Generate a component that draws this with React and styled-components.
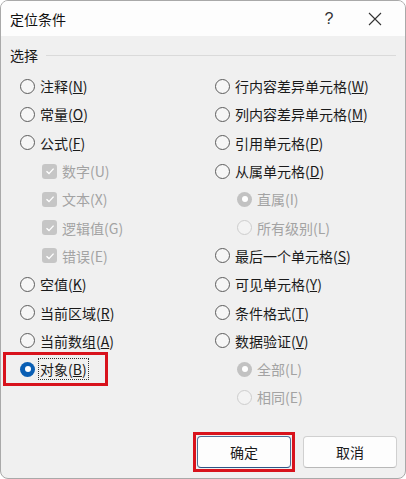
import styled, { createGlobalStyle } from 'styled-components';

const GlobalStyle = createGlobalStyle`
  html, body {
    margin: 0;
    padding: 0;
    background: #ffffff;
  }
  body {
    font-family: 'Noto Sans CJK SC', 'Noto Sans', sans-serif;
    font-size: 14px;
    color: #1a1a1a;
  }
  * {
    box-sizing: border-box;
  }
`;

const Window = styled.div`
  width: 406px;
  height: 479px;
  display: flex;
  flex-direction: column;
  border: 1px solid #a9a9a9;
  border-radius: 8px;
  overflow: hidden;
  background: #f0f0f0;
`;

const TitleBar = styled.div`
  height: 35px;
  flex: none;
  display: flex;
  align-items: center;
  padding: 0 7px 0 9px;
  background: #fdfdfd;
`;

const Title = styled.div`
  flex: 1;
  font-size: 14px;
  line-height: 20px;
  color: #111;
`;

const TitleButton = styled.div`
  width: 46px;
  height: 35px;
  display: flex;
  align-items: center;
  justify-content: center;
  font-family: 'Liberation Sans', sans-serif;
  font-size: 16px;
  color: #333;
`;

const Body = styled.div`
  flex: 1;
  display: flex;
  flex-direction: column;
  padding: 9px 9px 6px 9px;
`;

const GroupHeader = styled.div`
  display: flex;
  align-items: center;
  gap: 8px;
  height: 20px;
`;

const Legend = styled.span`
  line-height: 20px;
`;

const GroupLine = styled.div`
  flex: 1;
  height: 1px;
  margin-top: 1px;
  background: #dadada;
`;

const Options = styled.div`
  display: grid;
  grid-template-columns: 195px 1fr;
  padding-left: 10px;
  margin-top: 7px;
`;

const Column = styled.div`
  display: flex;
  flex-direction: column;
`;

const Row = styled.label`
  height: 28.3px;
  display: flex;
  align-items: center;
  gap: 5px;
  padding-left: ${(p) => (p.$sub ? '22px' : '0')};
  color: ${(p) => (p.$disabled ? '#a3a3a3' : '#1a1a1a')};
  white-space: nowrap;
`;

const Radio = styled.span`
  width: 15px;
  height: 15px;
  flex: none;
  border-radius: 50%;
  display: flex;
  align-items: center;
  justify-content: center;
  border: ${(p) =>
    p.$checked ? 'none' : p.$disabled ? '1px solid #cdcdcd' : '1px solid #5c5c5c'};
  background: ${(p) =>
    p.$checked ? (p.$disabled ? '#c2c2c2' : '#0a5fb4') : p.$disabled ? '#f3f3f3' : '#f6f6f6'};

  &::after {
    content: '';
    display: ${(p) => (p.$checked ? 'block' : 'none')};
    width: 6px;
    height: 6px;
    border-radius: 50%;
    background: #ffffff;
  }
`;

const Check = styled.span`
  width: 15px;
  height: 15px;
  flex: none;
  border-radius: 3px;
  background: #c6c6c6;
  display: flex;
  align-items: center;
  justify-content: center;
`;

const Text = styled.span`
  line-height: 20px;
  padding: 0 1px;
  border: 1px ${(p) => (p.$focused ? 'dotted #333' : 'solid transparent')};
  margin-left: -2px;
`;

const Highlight = styled.div`
  width: 105px;
  margin: -3px 0 -3px -17px;
  padding-left: 14px;
  border: 3px solid #d8121c;
`;

const ButtonBar = styled.div`
  margin-top: auto;
  display: flex;
  justify-content: flex-end;
  align-items: center;
  gap: 8px;
  margin-right: -1px;
`;

const ButtonFrame = styled.div`
  padding: 1px;
  border: 3px solid #d8121c;
`;

const Button = styled.div`
  width: 94px;
  height: 32px;
  display: flex;
  align-items: center;
  justify-content: center;
  border-radius: 4px;
  background: #fdfdfd;
  border: 1px solid ${(p) => (p.$primary ? '#4f6f99' : '#d0d0d0')};
  border-bottom-color: ${(p) => (p.$primary ? '#2e5687' : '#b8b8b8')};
  font-size: 14px;
  color: #1a1a1a;
`;

const CheckMark = () => (
  <svg width="10" height="10" viewBox="0 0 10 10">
    <path d="M1.5 5.2 L4 7.6 L8.6 2.6" fill="none" stroke="#fff" strokeWidth="1.4" />
  </svg>
);

const CloseIcon = () => (
  <svg width="14" height="14" viewBox="0 0 14 14">
    <path d="M1 1 L13 13 M13 1 L1 13" stroke="#333" strokeWidth="1.1" />
  </svg>
);

const Label = ({ text, keyChar, focused }) => (
  <Text $focused={focused}>
    {text}(
    {keyChar.underline ? <u>{keyChar.c}</u> : keyChar.c})
  </Text>
);

const Option = ({ type = 'radio', text, k, checked, disabled, sub, underline = true, focused }) => (
  <Row $sub={sub} $disabled={disabled}>
    {type === 'check' ? (
      <Check>
        <CheckMark />
      </Check>
    ) : (
      <Radio $checked={checked} $disabled={disabled} />
    )}
    <Label text={text} keyChar={{ c: k, underline }} focused={focused} />
  </Row>
);

const leftOptions = [
  { text: '注释', k: 'N' },
  { text: '常量', k: 'O' },
  { text: '公式', k: 'F' },
  { type: 'check', text: '数字', k: 'U', sub: true, disabled: true, underline: false },
  { type: 'check', text: '文本', k: 'X', sub: true, disabled: true, underline: false },
  { type: 'check', text: '逻辑值', k: 'G', sub: true, disabled: true, underline: false },
  { type: 'check', text: '错误', k: 'E', sub: true, disabled: true, underline: false },
  { text: '空值', k: 'K' },
  { text: '当前区域', k: 'R' },
  { text: '当前数组', k: 'A' },
];

const rightOptions = [
  { text: '行内容差异单元格', k: 'W' },
  { text: '列内容差异单元格', k: 'M' },
  { text: '引用单元格', k: 'P' },
  { text: '从属单元格', k: 'D' },
  { text: '直属', k: 'I', sub: true, disabled: true, checked: true, underline: false },
  { text: '所有级别', k: 'L', sub: true, disabled: true, underline: false },
  { text: '最后一个单元格', k: 'S' },
  { text: '可见单元格', k: 'Y' },
  { text: '条件格式', k: 'T' },
  { text: '数据验证', k: 'V' },
  { text: '全部', k: 'L', sub: true, disabled: true, checked: true, underline: false },
  { text: '相同', k: 'E', sub: true, disabled: true, underline: false },
];

export default function App() {
  return (
    <>
      <GlobalStyle />
      <Window>
        <TitleBar>
          <Title>定位条件</Title>
          <TitleButton>?</TitleButton>
          <TitleButton>
            <CloseIcon />
          </TitleButton>
        </TitleBar>
        <Body>
          <GroupHeader>
            <Legend>选择</Legend>
            <GroupLine />
          </GroupHeader>
          <Options>
            <Column>
              {leftOptions.map((o) => (
                <Option key={o.text} {...o} />
              ))}
              <Highlight>
                <Option text="对象" k="B" checked focused />
              </Highlight>
            </Column>
            <Column>
              {rightOptions.map((o) => (
                <Option key={o.text} {...o} />
              ))}
            </Column>
          </Options>
          <ButtonBar>
            <ButtonFrame>
              <Button $primary>确定</Button>
            </ButtonFrame>
            <Button>取消</Button>
          </ButtonBar>
        </Body>
      </Window>
    </>
  );
}
